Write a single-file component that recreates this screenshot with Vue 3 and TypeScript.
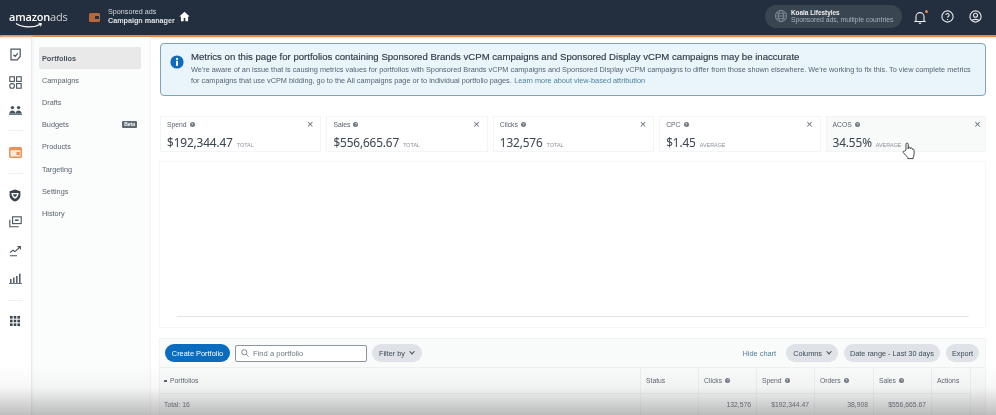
<script setup lang="ts">
const nav = ['Portfolios', 'Campaigns', 'Drafts', 'Budgets', 'Products', 'Targeting', 'Settings', 'History']
const metrics = [
  { name: 'Spend', value: '$192,344.47', unit: 'TOTAL' },
  { name: 'Sales', value: '$556,665.67', unit: 'TOTAL' },
  { name: 'Clicks', value: '132,576', unit: 'TOTAL' },
  { name: 'CPC', value: '$1.45', unit: 'AVERAGE' },
  { name: 'ACOS', value: '34.55%', unit: 'AVERAGE' },
]
const cols = [
  { name: 'Status', w: 58, info: false, total: '' },
  { name: 'Clicks', w: 58, info: true, total: '132,576' },
  { name: 'Spend', w: 58, info: true, total: '$192,344.47' },
  { name: 'Orders', w: 59, info: true, total: '38,908' },
  { name: 'Sales', w: 58, info: true, total: '$556,665.67' },
  { name: 'Actions', w: 39, info: false, total: '' },
]
</script>

<template>
  <div class="page">
    <header class="top">
      <div class="logo"><span class="lg1">amazon</span><span class="lg2">ads</span>
        <svg class="smile" width="28" height="7" viewBox="0 0 28 7"><path d="M1 1.5C8 6 19 6 26 2" fill="none" stroke="#fff" stroke-width="1.2"/><path d="M23.5 1.2l3 .4-1 2.8" fill="none" stroke="#fff" stroke-width="1"/></svg>
      </div>
      <svg class="wallet" width="11" height="9" viewBox="0 0 11 9"><rect width="11" height="9" rx="1.5" fill="#b5683a"/><rect x="6" y="3" width="4" height="3" rx=".6" fill="#232f3e"/></svg>
      <div class="product"><div>Sponsored ads</div><strong>Campaign manager</strong></div>
      <svg class="home" width="11" height="11" viewBox="0 0 12 12"><path d="M6 .8L.4 6h1.700v5.200h3V7.600h1.800v3.600h3V6h1.700z" fill="#fff"/></svg>
      <div class="spacer"></div>
      <div class="account">
        <svg width="14" height="14" viewBox="0 0 14 14" fill="none" stroke="#838c97" stroke-width=".9"><circle cx="7" cy="7" r="5.600"/><ellipse cx="7" cy="7" rx="2.500" ry="5.600"/><path d="M1.400 7h11.200M2.200 4.300h9.600M2.200 9.700h9.600"/></svg>
        <div class="acct-text"><b>Koala Lifestyles</b><span>Sponsored ads, multiple countries</span></div>
      </div>
      <div class="bell">
        <svg width="12" height="13" viewBox="0 0 12 13" fill="none" stroke="#e8eaec" stroke-width="1.100"><path d="M2 9.600V5.600a4 4 0 018 0v4l1 .9H1zM4.800 11.600a1.300 1.300 0 002.400 0"/></svg>
        <i class="dot"></i>
      </div>
      <svg class="ticon" width="13" height="13" viewBox="0 0 13 13" fill="none" stroke="#e8eaec" stroke-width="1.100"><circle cx="6.500" cy="6.500" r="5.600"/><path d="M4.900 5.100a1.600 1.600 0 113 .8c-.6.500-1.400.8-1.400 1.700M6.500 9v.9"/></svg>
      <svg class="ticon user" width="13" height="13" viewBox="0 0 13 13" fill="none" stroke="#e8eaec" stroke-width="1.100"><circle cx="6.500" cy="6.500" r="5.600"/><circle cx="6.500" cy="5.200" r="2"/><path d="M2.800 10.600c1-1.700 6.400-1.700 7.400 0"/></svg>
    </header>

    <div class="body">
      <aside class="rail">
        <svg class="ri i1" width="13" height="13" viewBox="0 0 13 13" fill="none" stroke="#4a535d" stroke-width="1.200"><path d="M2 1.200h9.200v7.200l-3 3.400H2zM4.500 6.800l1.700 1.600 2.600-3"/></svg>
        <svg class="ri i2" width="13" height="13" viewBox="0 0 13 13" fill="none" stroke="#4a535d" stroke-width="1.100"><rect x=".8" y=".8" width="4.600" height="4.600"/><rect x="7.600" y=".8" width="4.600" height="4.600"/><rect x=".8" y="7.600" width="4.600" height="4.600" rx="2"/><rect x="7.600" y="7.600" width="4.600" height="4.600"/></svg>
        <svg class="ri i3" width="13" height="10" viewBox="0 0 13 10" fill="#4a535d"><circle cx="3.400" cy="2.600" r="1.700"/><circle cx="9.600" cy="2.600" r="1.700"/><path d="M.4 8.600c0-4 6-4 6 0zM6.600 8.600c0-4 6-4 6 0z"/><rect y="8.600" width="13" height="1.200"/></svg>
        <div class="rule r1"></div>
        <svg class="ri i4" width="13" height="11" viewBox="0 0 13 11"><rect width="13" height="11" rx="1.800" fill="#e8915a"/><rect x="1.500" y="3.200" width="10" height="6.300" fill="#fbe9dc"/><rect x="7.500" y="5" width="3.200" height="3" fill="#e8915a"/></svg>
        <div class="rule r2"></div>
        <svg class="ri i5" width="12" height="13" viewBox="0 0 12 13"><path d="M6 .5l5.400 1.800v4.100c0 3-2.400 5.100-5.400 6.100C3 11.500.6 9.400.6 6.400V2.300z" fill="#3b444e"/><path d="M2.300 4h7.400C9.500 6.800 8 8.900 6 9.800 4 8.900 2.500 6.800 2.300 4z" fill="#fff"/><path d="M4 5.200h4C7.800 6.500 7 7.500 6 8 5 7.500 4.200 6.500 4 5.200z" fill="#3b444e"/></svg>
        <svg class="ri i6" width="13" height="12" viewBox="0 0 13 12" fill="none" stroke="#4a535d" stroke-width="1.100"><rect x="3.600" y=".8" width="8.600" height="6.800"/><path d="M.8 3.800v7h9"/><path d="M6 4.200h3.600" stroke-width="1.500"/></svg>
        <svg class="ri i7" width="13" height="12" viewBox="0 0 13 12" fill="none" stroke="#4a535d" stroke-width="1.100"><path d="M.8 7.600l3.200-2.400 2 1.400 5-4.600M8.400 1.600h3v3M1 10.800h7"/></svg>
        <svg class="ri i8" width="13" height="11" viewBox="0 0 13 11" fill="#5a636d"><rect x="1" y="6" width="1.600" height="4"/><rect x="4" y="4.500" width="1.600" height="5.500"/><rect x="7" y="3" width="1.600" height="7"/><rect x="10" y=".6" width="1.600" height="9.400"/><rect y="10" width="13" height=".9"/></svg>
        <div class="rule r3"></div>
        <svg class="ri i9" width="10" height="10" viewBox="0 0 10 10" fill="#3b444e"><rect width="2.600" height="2.600"/><rect x="3.700" width="2.600" height="2.600"/><rect x="7.400" width="2.600" height="2.600"/><rect y="3.700" width="2.600" height="2.600"/><rect x="3.700" y="3.700" width="2.600" height="2.600"/><rect x="7.400" y="3.700" width="2.600" height="2.600"/><rect y="7.400" width="2.600" height="2.600"/><rect x="3.700" y="7.400" width="2.600" height="2.600"/><rect x="7.400" y="7.400" width="2.600" height="2.600"/></svg>
      </aside>

      <nav class="side">
        <div v-for="(n, i) in nav" :key="n" class="nav-item" :class="{ active: i === 0 }">
          <span>{{ n }}</span><em v-if="n === 'Budgets'">Beta</em>
        </div>
      </nav>

      <main class="main">
        <section class="banner">
          <svg class="info" width="14" height="14" viewBox="0 0 14 14"><circle cx="7" cy="7" r="6.600" fill="#0f6cbd"/><circle cx="7" cy="3.900" r="1.100" fill="#fff"/><rect x="6" y="5.800" width="2" height="5" fill="#fff"/></svg>
          <div class="banner-text">
            <h1>Metrics on this page for portfolios containing Sponsored Brands vCPM campaigns and Sponsored Display vCPM campaigns may be inaccurate</h1>
            <p class="l1">We're aware of an issue that is causing metrics values for portfolios with Sponsored Brands vCPM campaigns and Sponsored Display vCPM campaigns to differ from those shown elsewhere. We're working to fix this. To view complete metrics</p>
            <p class="l2"><span>for campaigns that use vCPM bidding, go to the All campaigns page or to individual portfolio pages.</span><a>Learn more about view-based attribution</a></p>
          </div>
        </section>

        <section class="cards">
          <div v-for="(m, i) in metrics" :key="m.name" class="card" :class="{ hover: i === 4 }">
            <div class="card-top"><span>{{ m.name }}</span><i class="q">?</i><b class="x">×</b></div>
            <div class="card-val"><strong>{{ m.value }}</strong><small>{{ m.unit }}</small></div>
            <svg v-if="i === 4" class="hand" width="14" height="18" viewBox="0 0 14 18"><path d="M4 8V2.200a1.100 1.100 0 012.200 0V7l.2-1.400c.6-.8 1.700-.6 1.900.3l.1 1 .2-.7c.6-.7 1.600-.4 1.700.5l.1.8c.5-.5 1.600-.4 1.700.7v3.800c0 1.500-.6 2.400-1 3.200v1.400H5.700v-1.200C4.300 14 2.800 12.300 1.300 10.600c-.7-1 .5-2.100 1.500-1.400z" fill="#fff" stroke="#333" stroke-width=".9"/></svg>
          </div>
        </section>

        <section class="chart"><div class="axis"></div></section>

        <section class="panel">
          <div class="toolbar">
            <button class="primary">Create Portfolio</button>
            <label class="search">
              <svg width="8" height="8" viewBox="0 0 9 9" fill="none" stroke="#7b8490" stroke-width="1.100"><circle cx="3.700" cy="3.700" r="2.900"/><path d="M6 6l2.500 2.500"/></svg>
              <span>Find a portfolio</span>
            </label>
            <button class="pill filter">Filter by <span class="chev"></span></button>
            <div class="spacer"></div>
            <a class="hide">Hide chart</a>
            <button class="pill">Columns <span class="chev"></span></button>
            <button class="pill tight">Date range - Last 30 days</button>
            <button class="pill tight">Export</button>
          </div>
          <div class="row head">
            <div class="cell first"><span class="sort"></span>Portfolios</div>
            <div v-for="c in cols" :key="c.name" class="cell" :style="{ width: c.w + 'px' }">{{ c.name }}<i v-if="c.info" class="q">?</i></div>
          </div>
          <div class="row totals">
            <div class="cell first">Total: 16</div>
            <div v-for="c in cols" :key="c.name" class="cell num" :style="{ width: c.w + 'px' }">{{ c.total }}</div>
          </div>
        </section>
      </main>
    </div>
    <div class="fade"></div>
  </div>
</template>

<style>
html, body { margin: 0; background: #fff; overflow: hidden; }
</style>

<style scoped>
.page { position: relative; width: 996px; height: 415px; overflow: hidden; font-family: "Liberation Sans", Arial, sans-serif; color: #3a444f; background: #fff; filter: blur(0.4px); }
.top { height: 35px; background: #232f3e; border-bottom: 2px solid #e08a4f; display: flex; align-items: center; color: #fff; box-shadow: 0 1px 2px #f6dcc8; }
.logo { position: relative; width: 58px; margin-left: 9px; font-size: 11px; white-space: nowrap; margin-top: -3px; font-family: "Open Sans", sans-serif; letter-spacing: -.2px; }
.lg1 { font-weight: 600; }
.lg2 { color: #cfd3d8; }
.smile { position: absolute; left: 6px; top: 13px; }
.wallet { margin-left: 22px; }
.product { margin-left: 8px; font-size: 7.200px; line-height: 9px; color: #d4d7db; white-space: nowrap; margin-top: -3px; }
.product strong { color: #dfe2e5; font-size: 7.200px; }
.home { margin-left: 4px; margin-top: -3px; }
.spacer { flex: 1; }
.account { width: 137px; height: 23px; background: #3a4552; border-radius: 12px; display: flex; align-items: center; gap: 3px; padding-left: 9px; box-sizing: border-box; margin-right: 12px; margin-top: -3px; }
.acct-text { display: flex; flex-direction: column; font-size: 6.800px; line-height: 7.500px; white-space: nowrap; color: #a9b0b8; }
.acct-text b { color: #f0f1f3; font-weight: 600; font-size: 6.400px; }
.bell { position: relative; height: 13px; margin-right: 15px; margin-top: -3px; }
.dot { position: absolute; left: 11px; top: 0; width: 3px; height: 3px; border-radius: 50%; background: #e08a4f; }
.ticon { margin-right: 15px; margin-top: -3px; }
.ticon.user { margin-right: 14px; }

.body { display: flex; height: 378px; }
.rail { width: 32px; box-sizing: border-box; border-right: 1px solid #e9ebee; display: flex; flex-direction: column; align-items: center; box-shadow: 1px 0 2px #f1f2f4; flex: none; position: relative; }
.ri { display: block; flex: none; margin-right: 1px; }
.i1 { margin-top: 11px; }
.i2 { margin-top: 14.500px; }
.i3 { margin-top: 16.500px; }
.i4 { margin-top: 15.500px; }
.i5 { margin-top: 14.500px; }
.i6 { margin-top: 14.500px; }
.i7 { margin-top: 17px; }
.i8 { margin-top: 15.500px; }
.i9 { margin-top: 15px; }
.rule { width: 16px; height: 1px; background: #eef0f2; margin-right: 1px; flex: none; }
.r1 { margin-top: 15px; }
.r2 { margin-top: 15.500px; }
.r3 { margin-top: 16.500px; }
.side { width: 119px; box-sizing: border-box; padding: 10px 9px 0 7px; flex: none; background: #fbfcfc; border-right: 1px solid #f4f5f6; }
.nav-item { height: 22.200px; line-height: 22px; font-size: 7.300px; color: #59636e; padding-left: 3px; display: flex; justify-content: space-between; align-items: center; padding-right: 4px; }
.nav-item span { position: relative; top: .6px; }
.nav-item.active { background: #e9e9ea; color: #4a535e; font-weight: 700; border-radius: 1px; }
.nav-item em { font-style: normal; font-size: 5px; line-height: 7px; background: #5f6873; color: #fff; padding: 0 2px; font-weight: 700; border-radius: 1px; }
.main { flex: 1; padding: 6px 10px 0 8px; min-width: 0; }
.banner { height: 53px; box-sizing: border-box; background: #eaf5fb; border: 1px solid #7ea3b6; border-radius: 4px; display: flex; padding: 7px 8px 0 9px; gap: 7px; margin-left: 1px; }
.info { flex: none; margin-top: 4px; }
.banner-text { min-width: 0; flex: 1; }
.banner h1 { margin: 0; font-size: 9.600px; line-height: 12px; font-weight: 400; color: #2f3a45; white-space: nowrap; -webkit-text-stroke: .15px #2f3a45; }
.banner p { margin: 0; font-size: 7.320px; line-height: 10.500px; color: #566270; white-space: nowrap; }
.banner .l1 { margin-top: 2px; }
.l2 { display: flex; gap: 2.500px; }
.banner a { color: #4f7f9c; }
.cards { display: flex; gap: 5px; margin-top: 20px; margin-left: 1px; }
.card { position: relative; width: 161.400px; height: 36px; box-sizing: border-box; background: #fff; border: 1px solid #f3f4f5; padding: 3px 6px; flex: none; }
.card.hover { background: #f8f9f9; width: 160px; }
.card.hover .x { margin-right: -2px; }
.card-top { display: flex; align-items: center; font-size: 6.800px; line-height: 9px; color: #5a6470; }
.q { display: inline-block; width: 5px; height: 5px; border-radius: 50%; background: #6d7681; color: #fff; font-size: 4px; line-height: 5px; text-align: center; font-style: normal; margin-left: 3px; }
.x { margin-left: auto; margin-right: 1px; font-weight: 400; font-size: 11px; line-height: 9px; color: #5f6873; }
.card-val { display: flex; align-items: baseline; gap: 4px; margin-top: 6px; }
.card-val strong { font-size: 11.800px; line-height: 14px; font-weight: 400; color: #3c4651; font-family: "Open Sans", sans-serif; letter-spacing: -.1px; -webkit-text-stroke: .1px #3c4651; }
.card-val small { font-size: 5.400px; color: #8a929b; }
.hand { position: absolute; left: 75px; top: 25px; }
.chart { height: 167px; box-sizing: border-box; margin-top: 9px; border: 1px solid #f6f7f8; position: relative; }
.axis { position: absolute; left: 17px; right: 16px; bottom: 10px; height: 1px; background: #e4e5e6; }
.panel { margin-top: 10px; width: 827px; background: #f9fafa; border: 1px solid #f1f3f4; border-bottom: 0; height: 78px; box-sizing: border-box; }
.toolbar { display: flex; align-items: center; height: 29px; padding: 0 6px 0 5px; border-bottom: 1px solid #eef0f1; box-sizing: border-box; }
button { font-family: inherit; border: 0; white-space: nowrap; }
.primary { background: #0a6cbf; color: #fff; height: 18px; width: 65px; border-radius: 9px; font-size: 7.400px; padding: 0; }
.search { width: 132px; height: 17px; box-sizing: border-box; margin-left: 5px; background: #fff; border: 1px solid #8f959c; border-radius: 2px; display: flex; align-items: center; gap: 4px; padding-left: 5px; font-size: 7.600px; color: #6e7782; }
.pill { height: 18px; border-radius: 9px; background: #dfe3e8; font-size: 7.300px; color: #3f4954; padding: 0 7px; margin-left: 6px; display: flex; align-items: center; gap: 5px; }
.pill.tight { padding: 0 6px; }
.filter { width: 50px; margin-left: 5px; }
.chev { width: 3px; height: 3px; border-right: 1px solid #3f4954; border-bottom: 1px solid #3f4954; transform: rotate(45deg) translate(-1px, -1px); }
.hide { font-size: 7.400px; color: #4f7f9c; margin-right: 4px; }
.row { display: flex; }
.row.head { height: 26px; }
.row.totals { height: 22px; }
.cell { box-sizing: border-box; border-right: 1px solid #eceef0; border-bottom: 1px solid #eceef0; font-size: 6.800px; color: #59636e; padding: 0 5px; display: flex; align-items: center; flex: none; white-space: nowrap; }
.cell.first { width: 481px; padding-left: 4px; }
.cell.num { justify-content: flex-end; }
.sort { width: 3px; height: 2px; background: #59636e; margin-right: 3px; }
.fade { position: absolute; left: 0; right: 0; bottom: 0; height: 50px; background: linear-gradient(to bottom, rgba(150,150,150,0) 0%, rgba(150,150,150,.08) 45%, rgba(110,110,110,.45) 100%); pointer-events: none; }
</style>
